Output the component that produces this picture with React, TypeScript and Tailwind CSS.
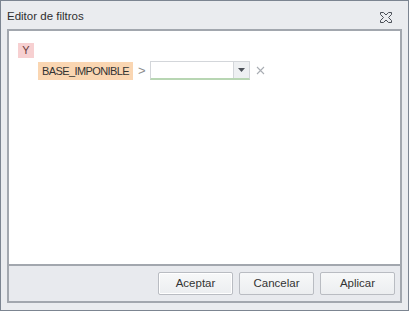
import React from "react";

const font = { fontFamily: '"Liberation Sans", Arial, sans-serif' };

const CloseGlyph = () => (
  <svg width="12" height="11" viewBox="0 0 12 11" className="block">
    <path
      d="M0.5 0.5 H3.5 L6 3 L8.5 0.5 H11.5 V2.5 L8.5 5.5 L11.5 8.5 V10.5 H8.5 L6 8 L3.5 10.5 H0.5 V8.5 L3.5 5.5 L0.5 2.5 Z"
      fill="none"
      stroke="#4a4f57"
      strokeWidth="1"
    />
  </svg>
);

const DialogButton = ({ label, primary }: { label: string; primary?: boolean }) => (
  <button
    className={
      "w-[75px] h-[23px] rounded-[2px] border border-[#b9bcc2] bg-gradient-to-b from-[#f7f8f9] to-[#eceef0] text-[11.5px] text-[#333] " +
      (primary ? "shadow-[inset_0_0_0_1px_#ffffff]" : "")
    }
  >
    {label}
  </button>
);

export default function App() {
  return (
    <div
      className="w-[409px] h-[311px] border border-[#7c8591] bg-[#eaecef] flex flex-col"
      style={font}
    >
      {/* title bar */}
      <div className="h-[28px] flex items-center justify-between pl-[6px] pr-[16px]">
        <span className="text-[11.5px] text-[#2f2f2f] pt-[4px]">Editor de filtros</span>
        <span className="pt-[4px]">
          <CloseGlyph />
        </span>
      </div>

      {/* frame */}
      <div className="mx-[6px] h-[274px] border-2 border-[#a2a7ae] flex flex-col">
        <div className="flex-1 bg-white pl-[9px] pt-[12px]">
          <div className="w-[16px] h-[15px] bg-[#f7d0d1] text-[#6b3b3b] text-[11px] leading-[15px] text-center">
            Y
          </div>
          <div className="flex items-center mt-[3px] ml-[20px]">
            <div className="h-[18px] w-[95px] bg-[#fad6b2] text-[#333] text-[11px] leading-[18px] text-center tracking-[-0.6px]">
              BASE_IMPONIBLE
            </div>
            <span className="ml-[5px] text-[#8c8c8c] text-[13px] leading-none">&gt;</span>
            <div className="ml-[4px] w-[100px] h-[19px] flex border border-[#d3d6da] border-b-2 border-b-[#b8d6b3] bg-white">
              <div className="flex-1" />
              <div className="w-[16px] h-full border-l border-[#d3d6da] bg-[#eef0f2] flex items-center justify-center">
                <svg width="7" height="4" viewBox="0 0 7 4">
                  <path d="M0 0 H7 L3.5 4 Z" fill="#4b5058" />
                </svg>
              </div>
            </div>
            <svg width="9" height="9" viewBox="0 0 9 9" className="ml-[6px]">
              <path d="M1 1 L8 8 M8 1 L1 8" stroke="#a9adb3" strokeWidth="1.1" />
            </svg>
          </div>
        </div>
        <div className="h-[37px] border-t-2 border-[#a2a7ae] bg-[#e8eaee] flex items-start justify-end gap-[6px] pt-[6px] pr-[5px]">
          <DialogButton label="Aceptar" primary />
          <DialogButton label="Cancelar" />
          <DialogButton label="Aplicar" />
        </div>
      </div>
    </div>
  );
}
